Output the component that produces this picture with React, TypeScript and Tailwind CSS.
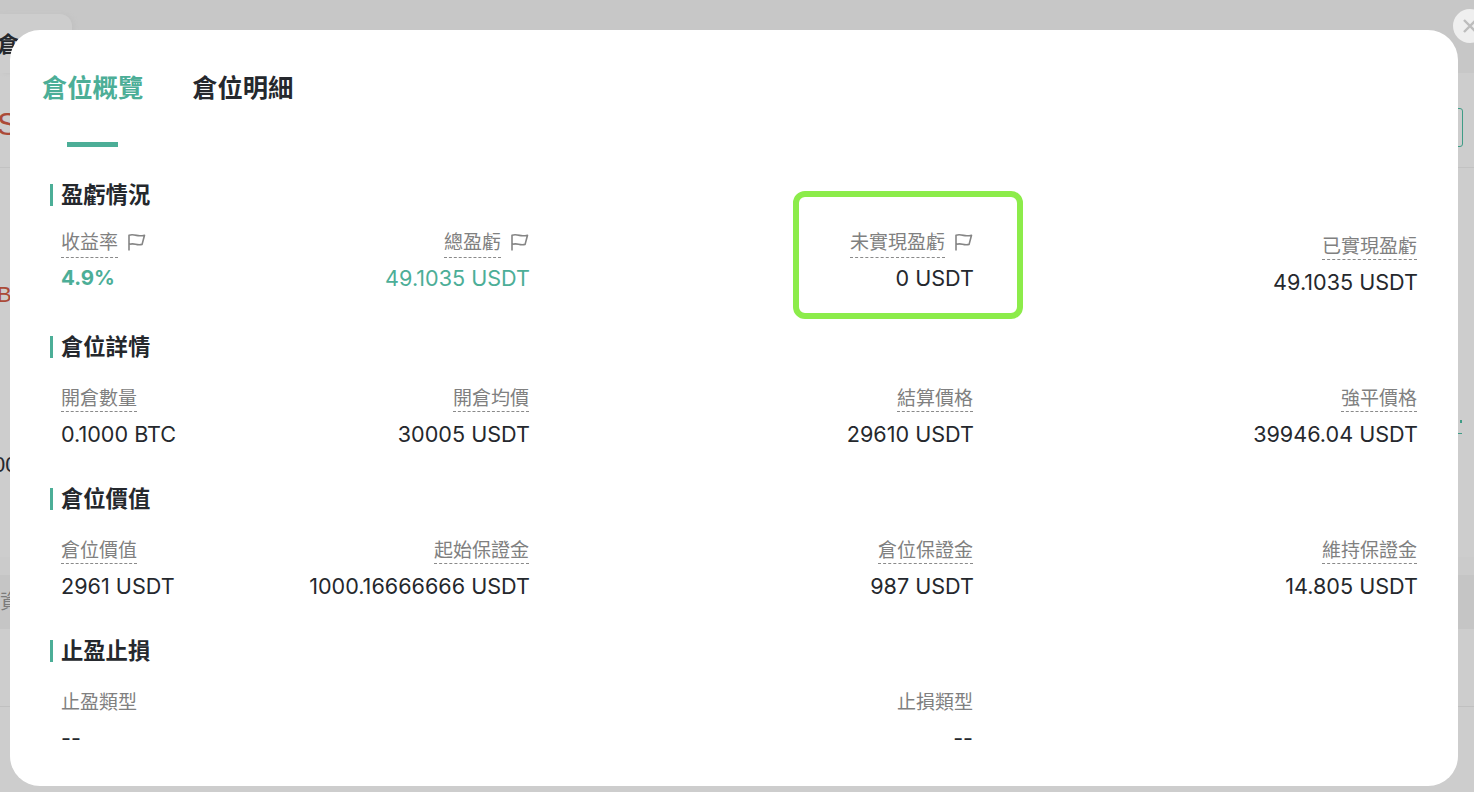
import React from 'react'

const sans = "font-['Liberation_Sans','Noto_Sans_CJK_TC',sans-serif]"
const num = "font-['Inter','Noto_Sans_CJK_TC',sans-serif]"

const FlagIcon = () => (
    <svg width="20" height="18" viewBox="0 0 20 18" fill="none" stroke="#858585" strokeWidth="1.6" strokeLinejoin="round" className="shrink-0">
        <path d="M2 17.5V2.200c2.600-.7 5-.4 7.500.2s5 .5 8-.2l-2.400 9.200c-2.400.5-4.600.3-6.600-.2s-4.200-.5-6.500.1"/>
    </svg>
)

type Item = {
    label: string
    value: string
    flag?: boolean
    green?: boolean
    bold?: boolean
}

const Cell = ({ item, left }: { item: Item; left?: boolean }) => (
    <div className={`flex flex-col ${left ? 'items-start' : 'items-end'} ${item.flag ? '-mt-1' : ''}`}>
        <div className="flex items-start gap-[9px]">
            <span className={`border-b border-dashed border-[#8a8a8a] box-border pt-[1.5px] text-[19px] leading-[26px] text-[#808080] ${item.flag ? 'h-[30px]' : 'h-[28px]'}`}>{item.label}</span>
            {item.flag && <span className="mt-[5px] -mr-px"><FlagIcon/></span>}
        </div>
        <div className={`${item.flag ? 'mt-[6px]' : 'mt-[8px]'} ${left ? '' : '-mr-px'} ${item.bold ? 'text-[20.500px] font-bold' : 'text-[21.600px]'} leading-[28px] whitespace-nowrap ${num} ${item.green ? 'text-[#4cae97]' : 'text-[#25282d]'}`}>
            {item.value}
        </div>
    </div>
)

const sections: { title: string; items: Item[] }[] = [
    {
        title: '盈虧情況',
        items: [
            { label: '收益率', value: '4.9%', flag: true, green: true, bold: true },
            { label: '總盈虧', value: '49.1035 USDT', flag: true, green: true },
            { label: '未實現盈虧', value: '0 USDT', flag: true },
            { label: '已實現盈虧', value: '49.1035 USDT' },
        ],
    },
    {
        title: '倉位詳情',
        items: [
            { label: '開倉數量', value: '0.1000 BTC' },
            { label: '開倉均價', value: '30005 USDT' },
            { label: '結算價格', value: '29610 USDT' },
            { label: '強平價格', value: '39946.04 USDT' },
        ],
    },
    {
        title: '倉位價值',
        items: [
            { label: '倉位價值', value: '2961 USDT' },
            { label: '起始保證金', value: '1000.16666666 USDT' },
            { label: '倉位保證金', value: '987 USDT' },
            { label: '維持保證金', value: '14.805 USDT' },
        ],
    },
]

const Title = ({ text }: { text: string }) => (
    <div className="flex items-center gap-2 h-[22px]">
        <div className="w-[3px] h-[22px] bg-[#4cae97]"/>
        <h3 className="pt-[2px] text-[22.300px] leading-[22px] font-bold text-[#25282d]">{text}</h3>
    </div>
)

function Backdrop() {
    return (
        <div className="flex flex-col h-full text-[#25282d]">
            <div className="h-[73px] bg-[#c7c7c7] pt-[14px]">
                <div className="w-[72px] h-[59px] rounded-tr-xl bg-[#cdcdcd] shadow-[3px_0_4px_#c2c2c2] pt-[18px] text-[22px] leading-[26px] font-bold overflow-hidden"><span className="-ml-[3px] block">倉</span></div>
            </div>
            <div className="relative h-[95px] shrink-0 flex items-center justify-between border-b border-[#c2c2c2]">
                <span className="text-[32px] text-[#ab4a38] mt-[8px] -ml-[3px]">S</span>
                <div className="absolute right-[11px] top-[35px] w-[30px] h-[39px] rounded-[3px] border border-[#3f9c86]"/>
            </div>
            <div className="h-[180px] shrink-0 pt-[114px] text-[22px] text-[#ab4a38] leading-[26px]"><span className="-ml-[3px] block">B</span></div>
            <div className="relative h-[209px] shrink-0 pt-[104px] text-[22px] leading-[26px]">
                <span className="-ml-[7px] block">00</span>
                <div className="absolute right-[12px] top-[72px] w-[2px] h-[3px] bg-[#3f9c86]"/>
                <div className="absolute right-[12px] top-[85px] w-[4px] h-px bg-[#3f9c86]"/>
            </div>
            <div className="h-[18px] shrink-0 bg-[#cbcbcb]"/>
            <div className="h-[54px] shrink-0 bg-[#c5c5c5] flex items-center text-[20px] text-[#7b7b7b]">資</div>
            <div className="h-[78px] shrink-0 border-b border-[#c0c0c0]"/>
        </div>
    )
}

export default function App() {
    return (
        <div className={`relative w-[1474px] h-[792px] overflow-hidden bg-[#cdcdcd] ${sans}`}>
            <Backdrop/>
            <div className="absolute left-[1453px] top-[9px] w-[34px] h-[34px] rounded-full bg-[#efefef] flex items-center justify-center">
                <svg width="34" height="34" viewBox="0 0 34 34" stroke="#bdbdbd" strokeWidth="2.4">
                    <path d="M11 11l12 12M23 11L11 23"/>
                </svg>
            </div>
            <div className="absolute left-[10px] top-[30px] w-[1448px] h-[756px] rounded-[30px] bg-white pl-[32px]">
                <div className="flex gap-[49px] h-[117px] items-start pt-[44px]">
                    <div className="relative text-[25.300px] leading-[28px] font-bold text-[#4cae97]">
                        倉位概覽
                        <div className="absolute left-[25px] top-[68px] w-[51px] h-[5px] bg-[#4cae97]"/>
                    </div>
                    <div className="text-[25.300px] leading-[28px] font-bold text-[#25282d]">倉位明細</div>
                </div>
                <div className="pl-[8px] pt-[37px]">
                    {sections.map(s => (
                        <div key={s.title} className="h-[152px]">
                            <Title text={s.title}/>
                            <div className="grid grid-cols-[234px_234px_444px_444px] pl-[11px] mt-[26px]">
                                {s.items.map((item, i) => <Cell key={item.label} item={item} left={i === 0}/>)}
                            </div>
                        </div>
                    ))}
                    <div>
                        <Title text="止盈止損"/>
                        <div className="grid grid-cols-[234px_234px_444px_444px] pl-[11px] mt-[26px]">
                            <div className="flex flex-col items-start">
                                <span className="pt-[1.500px] text-[19px] leading-[26px] text-[#808080]">止盈類型</span>
                                <span className={`mt-[8px] text-[21.600px] leading-[28px] text-[#25282d] ${num}`}>--</span>
                            </div>
                            <div/>
                            <div className="flex flex-col items-end">
                                <span className="pt-[1.500px] text-[19px] leading-[26px] text-[#808080]">止損類型</span>
                                <span className={`mt-[8px] text-[21.600px] leading-[28px] text-[#25282d] ${num}`}>--</span>
                            </div>
                        </div>
                    </div>
                </div>
            </div>
            <div className="absolute left-[793px] top-[191px] w-[230px] h-[128px] rounded-[12px] border-[6px] border-[#8cec4a]"/>
        </div>
    )
}
